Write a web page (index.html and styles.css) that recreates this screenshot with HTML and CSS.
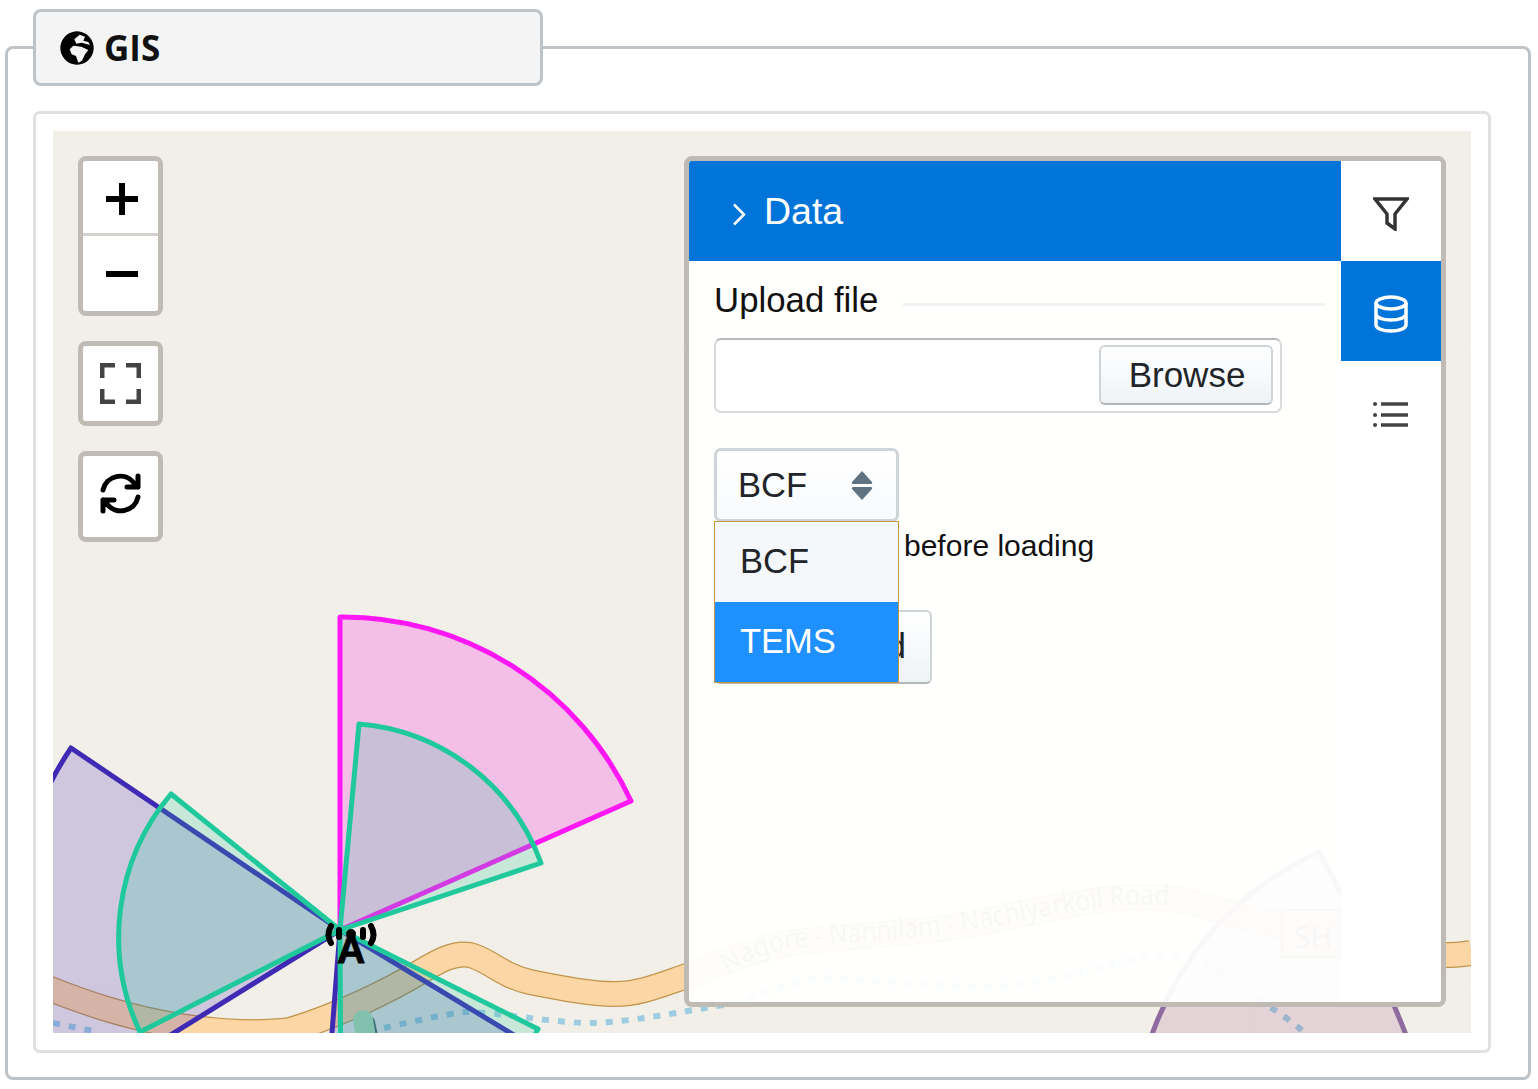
FILE: index.html
```html
<!doctype html>
<html lang="en">
<head>
    <meta charset="UTF-8">
    <title>GIS</title>
    <link rel="stylesheet" href="styles.css">
</head>
<body>
    <fieldset class="gis-box">
        <legend class="gis-legend">
            <svg class="globe" viewBox="61 61 102 102"><path fill-rule="evenodd" d="M112 62a50 50 0 1 0 .01 0ZM104 86L120 72L136 78L131 90L146 94L151 103L126 96L110 99ZM90 116L101 105L125 108L146 118L136 131L127 150L116 156L109 136L96 131Z"/></svg>
            <span>GIS</span>
        </legend>

        <div class="inner-box">
            <div class="map">
                <svg class="map-canvas" viewBox="53 131 1418 902">
                    <!-- tile seams -->
                    <path class="seam" d="M53 349H1471M53 988H1471M611 131V1033M1251 131V1033"/>
                    <!-- road -->
                    <path class="road-edge" d="M40 985C90 1005 130 1018 180 1026C220 1032 260 1034 290 1030C340 1015 390 990 420 972C440 960 455 952 470 955C490 960 500 975 530 982C560 988 590 994 615 994C640 994 660 985 690 975C730 958 760 948 790 943C850 935 900 935 954 927C1010 918 1070 902 1118 898C1150 895 1180 898 1210 907C1240 917 1260 922 1282 925L1342 940C1400 955 1440 958 1471 953"/>
                    <path class="road-fill" d="M40 985C90 1005 130 1018 180 1026C220 1032 260 1034 290 1030C340 1015 390 990 420 972C440 960 455 952 470 955C490 960 500 975 530 982C560 988 590 994 615 994C640 994 660 985 690 975C730 958 760 948 790 943C850 935 900 935 954 927C1010 918 1070 902 1118 898C1150 895 1180 898 1210 907C1240 917 1260 922 1282 925L1342 940C1400 955 1440 958 1471 953"/>
                    <path id="roadLabel" class="no-line" d="M728 974C750 958 770 952 790 949C850 941 900 941 954 933C1010 924 1070 910 1118 906C1140 904 1160 904 1185 906"/>
                    <text class="road-text" textLength="450" lengthAdjust="spacingAndGlyphs"><textPath href="#roadLabel">Nagore - Nannilam - Nachiyarkoil Road</textPath></text>
                    <rect class="shield" x="1282" y="910" width="70" height="47"/>
                    <text class="shield-text" x="1294" y="948">SH 6</text>
                    <!-- water -->
                    <path class="water" d="M53 1023L98 1032M384 1028C410 1022 440 1015 465 1012C500 1012 550 1023 593 1023C630 1022 680 1012 735 1003C760 995 790 982 817 978C880 978 960 992 1019 985C1080 975 1130 955 1172 955C1195 957 1210 965 1227 977C1250 995 1280 1012 1298 1027L1312 1040"/>
                    <path class="path-edge" d="M369 1022L375 1050"/>
                    <path class="path-fill" d="M363 1020L368 1050"/>
                    <!-- sectors -->
                    <path class="sector s-purple" d="M1150 1040Q1195 910 1319 852L1342 895Q1385 980 1408 1040"/>
                    <path class="sector s-magenta" d="M340 930V617A318 318 0 0 1 631 801Z"/>
                    <path class="sector s-blue" d="M340 930L71 748A325 325 0 0 0 64 1101Z"/>
                    <path class="sector s-blue" d="M340 930L326 1110L600 1087Z"/>
                    <path class="sector s-green" d="M340 930L359 724A212 212 0 0 1 541 863Z"/>
                    <path class="sector s-green" d="M340 930L171 794A222 222 0 0 0 140 1032Z"/>
                    <path class="sector s-green" d="M340 930L538 1029A221 221 0 0 1 341 1151Z"/>
                    <!-- antenna marker -->
                    <path class="marker-arc" d="M331 926Q326 935 331 943M371 926Q376 935 371 943M339 930V937M363 930V937"/>
                    <circle cx="351" cy="934" r="5"/>
                    <text class="marker-a" x="351" y="963">A</text>
                </svg>

                <div class="controls">
                    <div class="ctrl zoom-ctrl">
                        <button class="ctrl-btn zoom-in"><svg viewBox="0 0 32 32" width="32" height="32"><path d="M0 16H32M16 0V32"/></svg></button>
                        <button class="ctrl-btn zoom-out"><svg viewBox="0 0 32 6" width="32" height="6"><path d="M0 3H32"/></svg></button>
                    </div>
                    <div class="ctrl">
                        <button class="ctrl-btn full-btn"><svg viewBox="0 0 41 41" width="41" height="41"><path d="M2 15V2H15M26 2H39V15M39 26V39H26M15 39H2V26"/></svg></button>
                    </div>
                    <div class="ctrl">
                        <button class="ctrl-btn sync-btn"><svg viewBox="0 0 41 41" width="41" height="41"><path d="M3 17A17.5 17.5 0 0 1 34 10L38 14M38 3V14H27M38 24A17.5 17.5 0 0 1 7 31L3 27M3 38V27H14"/></svg></button>
                    </div>
                </div>

                <div class="panel">
                    <div class="panel-main">
                        <div class="panel-head">
                            <svg class="chevron" viewBox="0 0 14 23" width="14" height="23"><path d="M2 1.5L12 11.5L2 21.5"/></svg>
                            <span>Data</span>
                        </div>
                        <div class="panel-body">
                            <div class="section-title">
                                <span>Upload file</span>
                                <i class="title-line"></i>
                            </div>
                            <div class="file-box">
                                <button class="btn browse-btn">Browse</button>
                            </div>
                            <div class="select-wrap">
                                <div class="select-box">
                                    <span>BCF</span>
                                    <svg viewBox="0 0 22 31" width="22" height="31"><path d="M11 1L21 12C21.500 13 21 14 20 14H2C1 14 .5 13 1 12ZM11 30L21 19C21.500 18 21 17 20 17H2C1 17 .5 18 1 19Z"/></svg>
                                </div>
                                <ul class="select-menu">
                                    <li>BCF</li>
                                    <li class="is-active">TEMS</li>
                                </ul>
                            </div>
                            <p class="check-row">before loading</p>
                            <button class="btn upload-btn">Upload</button>
                        </div>
                    </div>
                    <div class="panel-tabs">
                        <div class="tab">
                            <svg class="tab-filter" viewBox="0 0 36 34" width="36" height="34"><path d="M2 2H34L22 17V32L14 26V17Z"/></svg>
                        </div>
                        <div class="tab is-active">
                            <svg class="tab-db" viewBox="0 0 34 38" width="34" height="38"><ellipse cx="17" cy="8" rx="15" ry="6"/><path d="M2 8V30C2 33.500 9 36 17 36S32 33.500 32 30V8M2 19C2 22.500 9 25 17 25S32 22.500 32 19"/></svg>
                        </div>
                        <div class="tab">
                            <svg class="tab-list" viewBox="0 0 36 26" width="36" height="26"><path d="M8 3H35M8 14H35M8 24H35"/><path class="dots" d="M2 3H2.100M2 14H2.100M2 24H2.100"/></svg>
                        </div>
                    </div>
                </div>
            </div>
        </div>
    </fieldset>
</body>
</html>
```

FILE: styles.css
```css
* {box-sizing: border-box;}
html, body {margin: 0; padding: 0; background: #fff;}
body {font-family: "Liberation Sans", Arial, sans-serif; color: #111;}
button {font-family: inherit; margin: 0;}

.gis-box {
    margin: 9px 7px 0 5px;
    padding: 0 37px 24px 25px;
    height: 1071px;
    border: 3px solid #bdc3c7;
    border-radius: 8px;
    min-width: 0;
}
.gis-legend {
    display: flex;
    align-items: center;
    width: 510px;
    height: 77px;
    margin-left: 0;
    padding: 0 0 0 24px;
    background: #f4f4f4;
    border: 3px solid #bdc3c7;
    border-radius: 8px;
    font-family: "Open Sans", sans-serif;
    font-weight: 700;
    font-size: 35px;
    color: #111;
}
.globe {width: 34px; height: 34px; margin-right: 10px;}

.inner-box {
    margin-top: 25px;
    height: 942px;
    padding: 17px;
    border: 3px solid #e0e0e0;
    border-radius: 7px;
}
.map {
    position: relative;
    height: 902px;
    background: #f2efe9;
    overflow: hidden;
}
.map-canvas {position: absolute; left: 0; top: 0; width: 100%; height: 100%;}
.seam {fill: none; stroke: #f0ede6; stroke-width: 1;}
.road-edge {fill: none; stroke: #c0954a; stroke-width: 26; stroke-linejoin: round;}
.road-fill {fill: none; stroke: #fcd6a4; stroke-width: 23.500; stroke-linejoin: round;}
.no-line {fill: none;}
.road-text {font-family: "Noto Sans", sans-serif; font-size: 28px; fill: #666;}
.shield {fill: #fcd6a4; stroke: #b68d4c; stroke-width: 2;}
.shield-text {font-family: "Noto Sans", sans-serif; font-size: 30px; fill: #666;}
.water {fill: none; stroke: #8fc6de; stroke-width: 6; stroke-dasharray: 7 9; opacity: .85;}
.path-edge {fill: none; stroke: #4d6a60; stroke-width: 12; stroke-linecap: round;}
.path-fill {fill: none; stroke: #b4e6b4; stroke-width: 20; stroke-linecap: round;}
.sector {stroke-width: 5; stroke-linejoin: round;}
.s-purple {stroke: #8e6a9e; fill: rgba(150, 60, 120, .16);}
.s-magenta {stroke: #ff17f5; fill: rgba(255, 0, 225, .2);}
.s-blue {stroke: #3f2ab4; fill: rgba(63, 42, 180, .2);}
.s-green {stroke: #1fc99c; fill: rgba(31, 201, 156, .2);}
.marker-arc {fill: none; stroke: #000; stroke-width: 6; stroke-linecap: round;}
.marker-a {font-family: "Liberation Sans", sans-serif; font-size: 39px; font-weight: 700; text-anchor: middle; fill: #000; stroke: #000; stroke-width: 1;}

.controls {
    position: absolute;
    left: 25px;
    top: 25px;
    display: flex;
    flex-direction: column;
    gap: 25px;
}
.ctrl {
    width: 85px;
    border: 5px solid #c0bcb5;
    border-radius: 8px;
    background: #fff;
    overflow: hidden;
}
.ctrl-btn {
    display: flex;
    align-items: center;
    justify-content: center;
    width: 100%;
    padding: 0;
    border: 0;
    background: #fff;
}
.ctrl-btn svg {fill: none; stroke: #000;}
.zoom-in {height: 75px; padding: 4px 0 0 3px; border-bottom: 3px solid #d4d1cc;}
.zoom-in svg, .zoom-out svg {stroke-width: 6;}
.zoom-out {height: 75px; padding: 0 0 0 3px;}
.full-btn {height: 75px;}
.full-btn svg {stroke: #444; stroke-width: 5;}
.sync-btn {height: 81px; padding-bottom: 6px;}
.sync-btn svg {stroke-width: 5; stroke-linecap: round; stroke-linejoin: round;}

.panel {
    position: absolute;
    top: 25px;
    right: 25px;
    display: flex;
    width: 762px;
    height: 851px;
    border: 5px solid #bfbab3;
    border-radius: 8px;
    overflow: hidden;
}
.panel-main {flex: 1; display: flex; flex-direction: column; min-width: 0;}
.panel-head {
    display: flex;
    align-items: center;
    height: 100px;
    padding-left: 43px;
    background: #0074d9;
    color: #fff;
    font-size: 37.500px;
}
.chevron {fill: none; stroke: #fff; stroke-width: 2.500; margin: 6px 18px 0 0;}
.panel-body {flex: 1; padding: 20px 16px 0 25px; background: rgba(255, 255, 255, .95);}
.section-title {display: flex; align-items: center; height: 38px; font-size: 34.800px; margin-bottom: 20px;}
.section-title span {margin-top: -1px;}
.title-line {flex: 1; height: 3px; margin: 8px 0 0 25px; background: #f2f2f2;}
.file-box {
    display: flex;
    align-items: center;
    justify-content: flex-end;
    width: 568px;
    height: 75px;
    margin-top: -1px;
    padding-right: 7px;
    border: 2px solid #dadada;
    border-top-color: #b9b9b9;
    border-radius: 7px;
    background: #fff;
}
.btn {
    border: 2px solid #cfd4d8;
    border-bottom-color: #b3b7bb;
    border-radius: 6px;
    background: linear-gradient(#fff, #eff3f6);
    color: #212529;
    font-size: 35px;
}
.browse-btn {width: 174px; height: 60px; margin-bottom: 2px; padding: 0 0 0 2px;}
.select-wrap {position: relative; width: 185px; margin-top: 35px;}
.select-box {
    display: flex;
    align-items: center;
    justify-content: space-between;
    height: 74px;
    padding: 0 24px 0 21px;
    border: 3px solid #cfd4d8;
    border-radius: 7px;
    background: linear-gradient(#fff, #f8fafc);
    color: #212529;
    font-size: 34.500px;
}
.select-box svg {fill: #5f7282; margin-right: -1px;}
.select-menu {
    position: absolute;
    left: 0;
    top: 73px;
    z-index: 2;
    width: 185px;
    margin: 0;
    padding: 0;
    list-style: none;
    border: 1px solid #c8963e;
    background: #f5f8fb;
    color: #212529;
    font-size: 34.500px;
}
.select-menu li {height: 80px; padding-left: 25px; line-height: 79px;}
.select-menu .is-active {background: #1e90ff; color: #fff;}
.check-row {margin: 6px 0 0; padding-left: 190px; font-size: 30px; line-height: 36px;}
.upload-btn {
    display: block;
    width: 218px;
    height: 74px;
    margin-top: 46px;
    padding: 0 24px 2px 0;
    text-align: right;
}

.panel-tabs {flex: 0 0 100px; background: #fff;}
.tab {display: flex; align-items: center; justify-content: center; height: 100px; background: #fff;}
.tab.is-active {background: #0074d9;}
.tab-filter {fill: none; stroke: #333; stroke-width: 3.500; margin-top: 5px;}
.tab-db {fill: none; stroke: #fff; stroke-width: 3.500; margin-top: 6px;}
.tab-list {fill: none; stroke: #444; stroke-width: 3.500; margin-top: 6px;}
.tab-list .dots {stroke-linecap: round; stroke-width: 4;}
```
